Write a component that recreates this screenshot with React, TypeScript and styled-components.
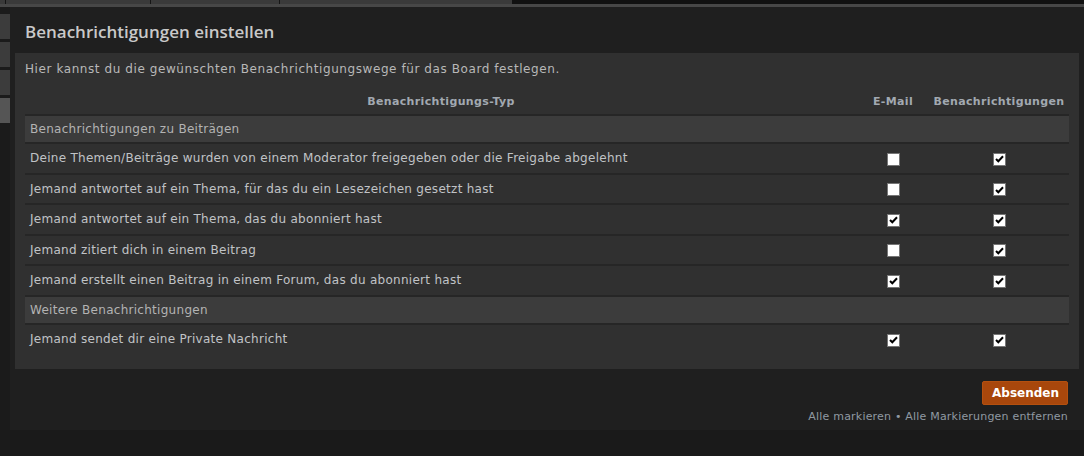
import React from "react";
import styled, { createGlobalStyle } from "styled-components";

const Global = createGlobalStyle`
  html, body { margin: 0; padding: 0; background: #1a1a1a; }
  body { font-family: "DejaVu Sans", Verdana, sans-serif; }
  * { box-sizing: border-box; }
`;

const Page = styled.div`
  width: 1084px;
  height: 456px;
  background: #1a1a1a;
  display: flex;
  flex-direction: column;
  overflow: hidden;
`;

const TopTabs = styled.div`
  height: 4px;
  display: flex;
  background: #111;
`;

const TopTab = styled.div<{ $w: number }>`
  width: ${(p) => p.$w}px;
  background: #3a3a3a;
  border-left: 1px solid #151515;
  &:first-child { border-left: none; }
`;

const TopLine = styled.div`
  height: 3px;
  background: #474747;
`;

const Body = styled.div`
  display: flex;
  flex: 1;
`;

const SideRail = styled.div`
  width: 10px;
  background: #1b1b1b;
  display: flex;
  flex-direction: column;
  gap: 3px;
  padding-top: 7px;
`;

const SideTab = styled.div<{ $active?: boolean }>`
  height: 25px;
  width: 10px;
  background: ${(p) => (p.$active ? "#555" : "#3c3c3c")};
`;

const Main = styled.div`
  flex: 1;
  display: flex;
  flex-direction: column;
`;

const Content = styled.div`
  background: #1f1f1f;
  padding: 0 5px;
  height: 423px;
  display: flex;
  flex-direction: column;
`;

const Title = styled.h2`
  margin: 0;
  height: 46px;
  display: flex;
  align-items: center;
  padding: 0 10px;
  padding-top: 3px;
  font-family: "Open Sans", sans-serif;
  font-weight: 600;
  font-size: 17px;
  color: #c9c9c9;
`;

const Panel = styled.div`
  background: #303030;
  padding: 8px 10px 15px;
`;

const Intro = styled.p`
  margin: 0 0 12px;
  font-size: 12px;
  letter-spacing: 0.58px;
  line-height: 16px;
  color: #b8b8b8;
`;

const Table = styled.table`
  width: 100%;
  border-collapse: collapse;
  font-size: 12px;
  letter-spacing: 0.28px;
`;

const Th = styled.th<{ $w?: number }>`
  font-weight: bold;
  font-size: 11px;
  letter-spacing: 0.35px;
  color: #a2a9b1;
  text-align: center;
  height: 26px;
  padding: 0 2px;
  width: ${(p) => (p.$w ? `${p.$w}px` : "auto")};
  white-space: nowrap;
  border-bottom: 2px solid #262626;
`;

const SectionRow = styled.tr`
  background: #3c3c3c;
  border-bottom: 2px solid #262626;
`;

const SectionCell = styled.td`
  height: 28px;
  padding: 0 5px;
  color: #b3b3b3;
`;

const Row = styled.tr<{ $last?: boolean }>`
  border-bottom: ${(p) => (p.$last ? "none" : "2px solid #262626")};
`;

const Cell = styled.td`
  height: 30.5px;
  padding: 0 5px;
  color: #c0c3c6;
  white-space: nowrap;
`;

const BoxCell = styled.td`
  text-align: center;
  padding: 0;
`;

const Box = styled.span`
  display: inline-flex;
  width: 13px;
  height: 13px;
  background: #fff;
  border: 1px solid #767676;
  vertical-align: middle;
  align-items: center;
  justify-content: center;
  margin-top: 1px;
`;

const Actions = styled.div`
  display: flex;
  flex-direction: column;
  align-items: flex-end;
  padding: 12px 11px 0 0;
  gap: 5px;
`;

const Button = styled.button`
  height: 24px;
  padding: 0 8px 0 9px;
  background: #a8470c;
  border: 1px solid #b4500f;
  border-radius: 2px;
  color: #fff;
  font-family: "DejaVu Sans", Verdana, sans-serif;
  font-weight: bold;
  font-size: 12px;
`;

const Links = styled.div`
  font-size: 11px;
  letter-spacing: 0.2px;
  color: #9099a2;
  line-height: 14px;
`;

const Footer = styled.div`
  flex: 1;
  background: #1a1a1a;
`;

const Check = () => (
  <svg width="9" height="8" viewBox="0 0 9 8">
    <path d="M1 4 L3.3 6.3 L8 1.3" stroke="#000" strokeWidth="2" fill="none" />
  </svg>
);

const CheckBox = ({ on }: { on: boolean }) => <Box>{on ? <Check /> : null}</Box>;

type Item = { label: string; mail: boolean; notif: boolean };

const group1: Item[] = [
  { label: "Deine Themen/Beiträge wurden von einem Moderator freigegeben oder die Freigabe abgelehnt", mail: false, notif: true },
  { label: "Jemand antwortet auf ein Thema, für das du ein Lesezeichen gesetzt hast", mail: false, notif: true },
  { label: "Jemand antwortet auf ein Thema, das du abonniert hast", mail: true, notif: true },
  { label: "Jemand zitiert dich in einem Beitrag", mail: false, notif: true },
  { label: "Jemand erstellt einen Beitrag in einem Forum, das du abonniert hast", mail: true, notif: true },
];

const group2: Item[] = [{ label: "Jemand sendet dir eine Private Nachricht", mail: true, notif: true }];

const ItemRow = ({ item, last }: { item: Item; last?: boolean }) => (
  <Row $last={last}>
    <Cell>{item.label}</Cell>
    <BoxCell>
      <CheckBox on={item.mail} />
    </BoxCell>
    <BoxCell>
      <CheckBox on={item.notif} />
    </BoxCell>
  </Row>
);

export default function App() {
  return (
    <Page>
      <Global />
      <TopTabs>
        <TopTab $w={5} />
        <TopTab $w={145} />
        <TopTab $w={129} />
        <TopTab $w={233} />
      </TopTabs>
      <TopLine />
      <Body>
        <SideRail>
          <SideTab />
          <SideTab />
          <SideTab />
          <SideTab $active />
        </SideRail>
        <Main>
          <Content>
            <Title>Benachrichtigungen einstellen</Title>
            <Panel>
              <Intro>Hier kannst du die gewünschten Benachrichtigungswege für das Board festlegen.</Intro>
              <Table>
                <thead>
                  <tr>
                    <Th>Benachrichtigungs-Typ</Th>
                    <Th $w={72}>E-Mail</Th>
                    <Th $w={140}>Benachrichtigungen</Th>
                  </tr>
                </thead>
                <tbody>
                  <SectionRow>
                    <SectionCell colSpan={3}>Benachrichtigungen zu Beiträgen</SectionCell>
                  </SectionRow>
                  {group1.map((it) => (
                    <ItemRow key={it.label} item={it} />
                  ))}
                  <SectionRow>
                    <SectionCell colSpan={3}>Weitere Benachrichtigungen</SectionCell>
                  </SectionRow>
                  {group2.map((it) => (
                    <ItemRow key={it.label} item={it} last />
                  ))}
                </tbody>
              </Table>
            </Panel>
            <Actions>
              <Button>Absenden</Button>
              <Links>Alle markieren • Alle Markierungen entfernen</Links>
            </Actions>
          </Content>
          <Footer />
        </Main>
      </Body>
    </Page>
  );
}
